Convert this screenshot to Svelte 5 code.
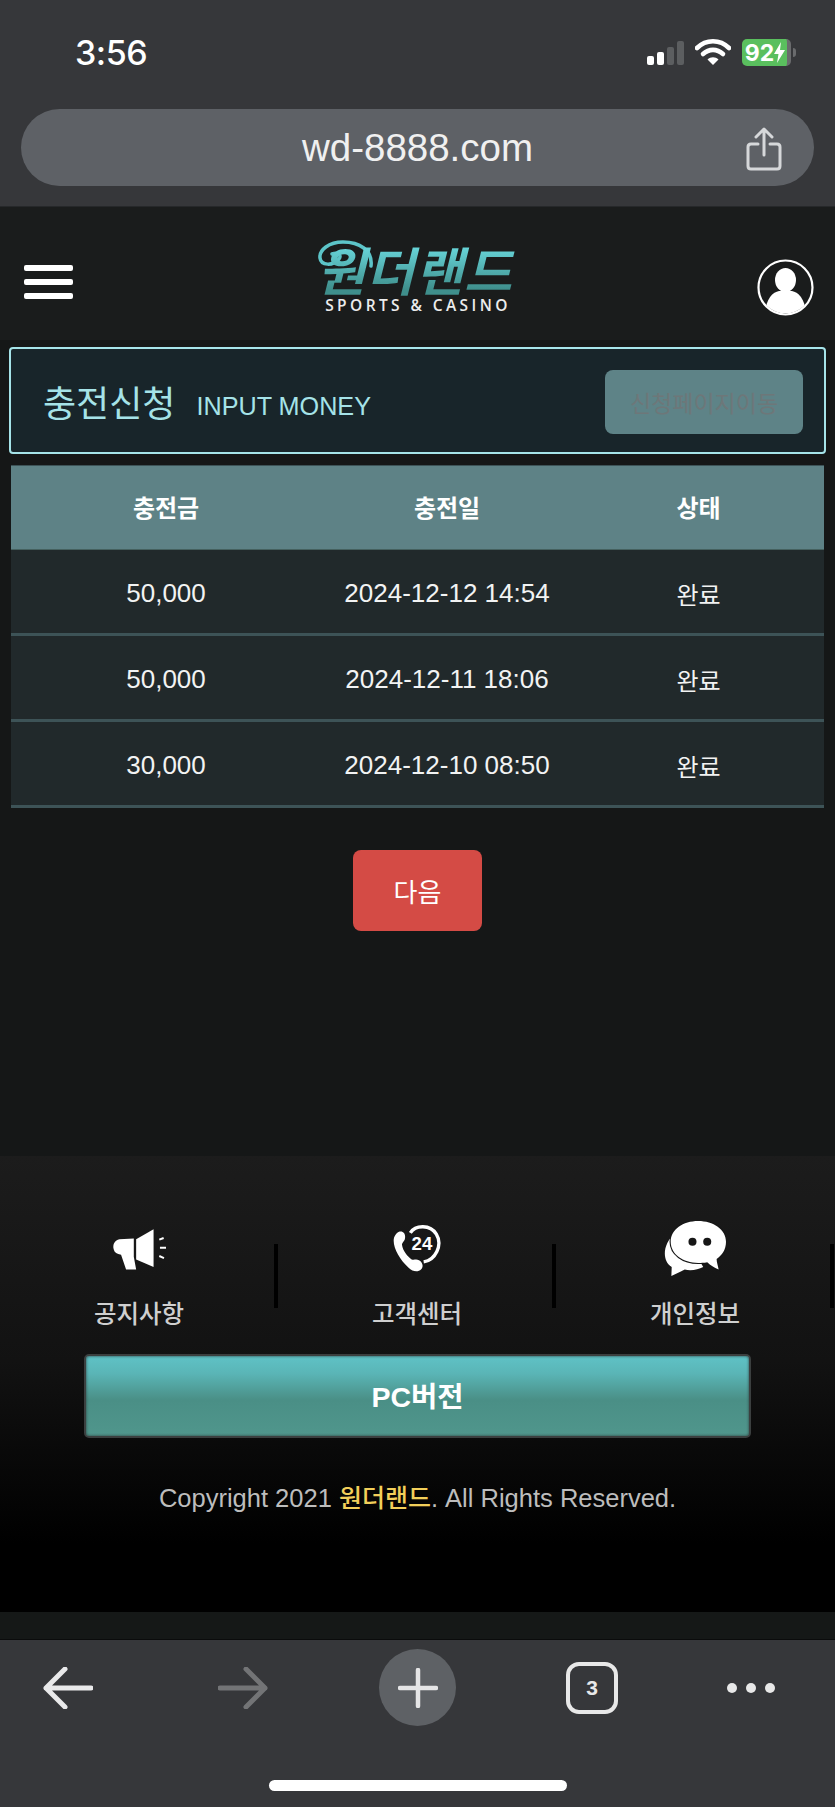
<script>
  const rows = [
    { amount: '50,000', date: '2024-12-12 14:54', status: '완료' },
    { amount: '50,000', date: '2024-12-11 18:06', status: '완료' },
    { amount: '30,000', date: '2024-12-10 08:50', status: '완료' }
  ];
</script>

<div class="page">
  <div class="topbar">
    <div class="status">
      <span class="time">3:56</span>
      <div class="status-right">
        <div class="signal">
          <i class="b1"></i><i class="b2"></i><i class="b3"></i><i class="b4"></i>
        </div>
        <svg class="wifi" width="36" height="28" viewBox="0 0 36 28">
          <path d="M2 10 C11 1 25 1 34 10" fill="none" stroke="#fff" stroke-width="4.6" stroke-linecap="round"/>
          <path d="M8 16 C14 10.500 22 10.500 28 16" fill="none" stroke="#fff" stroke-width="4.6" stroke-linecap="round"/>
          <path d="M12.500 21.500 C15.500 18.500 20.500 18.500 23.500 21.500 L18 27 Z" fill="#fff"/>
        </svg>
        <div class="battery">
          <div class="battery-body">
            <span>92</span>
            <svg width="11" height="21" viewBox="0 0 11 21"><path d="M7 0 L0 12 H4.500 L3 21 L11 8 H6 Z" fill="#fff"/></svg>
          </div>
          <i class="nub"></i>
        </div>
      </div>
    </div>
    <div class="urlbar">
      <span class="url">wd-8888.com</span>
      <svg class="share" width="36" height="44" viewBox="0 0 36 44" fill="none" stroke="#d6d8da" stroke-width="3" stroke-linecap="round" stroke-linejoin="round">
        <path d="M12 17 H5 Q2 17 2 20 V39 Q2 42 5 42 H31 Q34 42 34 39 V20 Q34 17 31 17 H24"/>
        <path d="M18 28 V3 M10 10 L18 2 L26 10"/>
      </svg>
    </div>
  </div>

  <header class="site-head">
    <div class="burger"><i></i><i></i><i></i></div>
    <div class="logo">
      <svg class="swirl" width="60" height="36" viewBox="0 0 60 36" fill="none">
        <path d="M54 26 C56 10 42 2 26 2 C12 2 2 10 3 18 C4 26 16 26 22 19 C25 15 21 12 15 14" stroke="#5cc4c8" stroke-width="3.500" stroke-linecap="round"/>
      </svg>
      <div class="logo-word">원더랜드</div>
      <div class="logo-sub">SPORTS &amp; CASINO</div>
    </div>
    <svg class="avatar" width="57" height="57" viewBox="0 0 57 57">
      <defs><clipPath id="avatar-clip"><circle cx="28.500" cy="28.500" r="26"/></clipPath></defs>
      <circle cx="28.500" cy="28.500" r="27" fill="#1a1c1c" stroke="#fff" stroke-width="2.200"/>
      <g clip-path="url(#avatar-clip)" fill="#fff">
        <ellipse cx="28.500" cy="21" rx="10.500" ry="12"/>
        <path d="M8 57 C8 40 16 33 22 32 H35 C41 33 49 40 49 57 Z"/>
      </g>
    </svg>
  </header>

  <main>
    <section class="panel">
      <div class="panel-title">
        <h2>충전신청</h2>
        <span>INPUT MONEY</span>
      </div>
      <button class="move">신청페이지이동</button>
    </section>

    <div class="table">
      <div class="row head">
        <div>충전금</div><div>충전일</div><div>상태</div>
      </div>
      {#each rows as row}
        <div class="row">
          <div>{row.amount}</div><div>{row.date}</div><div class="state">{row.status}</div>
        </div>
      {/each}
    </div>

    <div class="pager"><button class="next">다음</button></div>
  </main>

  <footer>
    <div class="links">
      <div class="link">
        <svg class="ico" width="57" height="45" viewBox="60 60 170 135">
          <path d="M135 100 L187 70 V183 L135 160 Z" fill="#fff"/>
          <path d="M128 98 L85 100 C72 102 64 115 68 130 C70 140 78 145 90 146 L105 190 H135 L128 152 Z" fill="#fff"/>
          <path d="M204 101 L217 96 M206 125 H224 M204 150 L218 156" stroke="#fff" stroke-width="6" fill="none"/>
        </svg>
        <span>공지사항</span>
      </div>
      <i class="sep"></i>
      <div class="link">
        <svg class="ico" width="49" height="50" viewBox="68 40 147 150">
          <path d="M120 68 C135 44 180 42 198 72 C218 105 195 150 160 155" fill="none" stroke="#fff" stroke-width="10"/>
          <path d="M88 64 C100 62 106 72 104 84 C103 94 95 96 95 104 C97 122 112 140 124 148 C132 150 138 146 146 150 C158 156 160 170 152 178 C144 186 128 186 114 172 C90 150 70 118 70 92 C70 78 78 68 88 64 Z" fill="#fff"/>
          <text x="155" y="120" text-anchor="middle" class="t24">24</text>
        </svg>
        <span>고객센터</span>
      </div>
      <i class="sep"></i>
      <div class="link">
        <svg class="ico" width="62" height="55" viewBox="883 33 185 164">
          <path d="M915 70 C880 100 875 150 906 170 L905 197 L945 178 C965 182 985 178 1000 170 L960 100 Z" fill="#fff"/>
          <path d="M985 33 C1030 33 1068 58 1068 95 C1068 118 1056 136 1040 146 C1040 156 1044 166 1046 178 C1032 172 1022 165 1012 156 C1002 158 994 158 985 158 C940 158 903 132 903 95 C903 58 940 33 985 33 Z" fill="#fff" stroke="#161616" stroke-width="7" paint-order="stroke"/>
          <circle cx="968" cy="95" r="12" fill="#161616"/>
          <circle cx="1012" cy="95" r="12" fill="#161616"/>
        </svg>
        <span>개인정보</span>
      </div>
      <i class="sep"></i>
    </div>

    <button class="pc">PC버전</button>
    <p class="copy">Copyright 2021 <b>원더랜드</b>. All Rights Reserved.</p>
  </footer>

  <div class="strip"></div>

  <nav class="toolbar">
    <div class="tools">
      <svg width="50" height="42" viewBox="0 0 50 42" fill="none" stroke="#e9e9ea" stroke-width="5" stroke-linecap="round" stroke-linejoin="round">
        <path d="M48 21 H3 M22 2 L3 21 L22 40"/>
      </svg>
      <svg width="50" height="42" viewBox="0 0 50 42" fill="none" stroke="#737476" stroke-width="5" stroke-linecap="round" stroke-linejoin="round">
        <path d="M2 21 H47 M28 2 L47 21 L28 40"/>
      </svg>
      <div class="plus">
        <svg width="40" height="40" viewBox="0 0 40 40" stroke="#e5e5e6" stroke-width="4.500" stroke-linecap="round">
          <path d="M20 2 V38 M2 20 H38"/>
        </svg>
      </div>
      <div class="tabs">3</div>
      <div class="dots"><i></i><i></i><i></i></div>
    </div>
    <div class="home"></div>
  </nav>
</div>

<style>
  :global(body) {
    margin: 0;
    background: #151717;
  }

  .page {
    width: 835px;
    height: 1807px;
    display: flex;
    flex-direction: column;
    overflow: hidden;
    font-family: "Liberation Sans", "Noto Sans CJK KR", sans-serif;
    color: #fff;
  }

  i {
    display: block;
  }

  button {
    font-family: inherit;
    border: none;
    padding: 0;
  }

  .topbar {
    height: 207px;
    box-sizing: border-box;
    background: #36373a;
    border-bottom: 1px solid #26282a;
    padding: 0 21px;
  }

  .status {
    height: 109px;
    display: flex;
    justify-content: space-between;
    align-items: flex-start;
    padding: 35px 18px 0 54px;
    box-sizing: border-box;
  }

  .time {
    font-size: 34px;
    line-height: 36px;
    font-weight: 500;
    font-family: Inter, sans-serif;
    letter-spacing: -0.5px;
  }

  .status-right {
    display: flex;
    align-items: flex-start;
    margin-top: 4px;
  }

  .signal {
    display: flex;
    align-items: flex-end;
    gap: 3px;
    height: 26px;
  }

  .signal i {
    width: 7px;
    border-radius: 2px;
  }

  .b1 { height: 9px; background: #fff; }
  .b2 { height: 13px; background: #fff; }
  .b3 { height: 18px; background: #5c5e60; }
  .b4 { height: 24px; background: #5c5e60; }

  .wifi {
    margin: -1px 11px 0 11px;
  }

  .battery {
    display: flex;
    align-items: center;
  }

  .battery-body {
    width: 49px;
    height: 27px;
    box-sizing: border-box;
    border-radius: 5px;
    border-right: 4px solid #6a6b6d;
    background: #5abf5e;
    display: flex;
    align-items: center;
    justify-content: center;
    font-family: Inter, sans-serif;
    font-size: 23px;
    font-weight: 700;
    padding-left: 1px;
  }

  .nub {
    width: 3px;
    height: 9px;
    margin-left: 2px;
    border-radius: 0 3px 3px 0;
    background: #6a6b6d;
  }

  .urlbar {
    height: 77px;
    background: #5e6166;
    border-radius: 39px;
    position: relative;
    display: flex;
    align-items: center;
    justify-content: center;
  }

  .url {
    font-size: 38.500px;
    color: #f0f0f0;
  }

  .share {
    position: absolute;
    right: 32px;
    top: 18px;
  }

  .site-head {
    height: 133px;
    box-sizing: border-box;
    background: #1a1c1c;
    display: flex;
    justify-content: space-between;
    align-items: flex-start;
    padding: 52px 21px 0 24px;
    position: relative;
  }

  .burger {
    width: 49px;
    margin-top: 6px;
    display: flex;
    flex-direction: column;
    gap: 8px;
  }

  .burger i {
    height: 6px;
    border-radius: 2px;
    background: #fff;
  }

  .logo {
    position: absolute;
    left: 317px;
    top: 33px;
    width: 202px;
    text-align: center;
  }

  .swirl {
    position: absolute;
    left: 0;
    top: 0;
  }

  .logo-word {
    font-family: "Noto Sans CJK KR", sans-serif;
    font-weight: 700;
    font-size: 52px;
    line-height: 58px;
    letter-spacing: 1px;
    margin-top: 0;
    text-align: left;
    white-space: nowrap;
    transform: skewX(-14deg);
    padding-left: 6px;
    background: linear-gradient(180deg, #66d2d6 15%, #3f8f8c 85%);
    -webkit-background-clip: text;
    background-clip: text;
    color: transparent;
  }

  .logo-sub {
    font-family: "Open Sans", sans-serif;
    font-weight: 600;
    font-size: 15.500px;
    line-height: 16px;
    letter-spacing: 3.400px;
    white-space: nowrap;
    color: #ececec;
    margin-top: -1px;
  }

  main {
    flex: 1;
    padding-top: 7px;
    background: #151717;
  }

  .panel {
    margin: 0 9px;
    height: 107px;
    box-sizing: border-box;
    background: #18252a;
    border: 2px solid #a5e3e8;
    border-radius: 4px;
    display: flex;
    align-items: center;
    justify-content: space-between;
    padding: 0 21px 0 32px;
  }

  .panel-title {
    display: flex;
    align-items: center;
    gap: 21px;
    color: #a5e3e8;
  }

  .panel-title h2 {
    margin: 0;
    font-weight: 400;
    font-size: 36px;
    font-family: "Noto Sans CJK KR", sans-serif;
  }

  .panel-title span {
    font-size: 25.200px;
    margin-top: 11px;
  }

  .move {
    width: 198px;
    height: 64px;
    margin-top: 3px;
    border-radius: 8px;
    background: #5e8387;
    color: #6d7779;
    font-size: 23px;
  }

  .table {
    margin: 11px 11px 0;
  }

  .row {
    display: grid;
    grid-template-columns: 310px 252px 251px;
    height: 86px;
    box-sizing: border-box;
    padding-top: 3px;
    align-items: center;
    text-align: center;
    background: #21292b;
    border-bottom: 3px solid #3d5357;
    font-size: 26px;
    color: #f2f3f3;
  }

  .row.head {
    height: 85px;
    padding: 0 0 2px;
    background: #5e8286;
    border-bottom: 1px solid #45615f;
    border-top: 1px solid #3d5357;
    font-size: 24px;
    font-weight: 700;
    color: #fff;
  }

  .state {
    font-size: 24px;
  }

  .pager {
    display: flex;
    justify-content: center;
    margin-top: 42px;
  }

  .next {
    width: 129px;
    height: 81px;
    border-radius: 8px;
    background: #d44b45;
    color: #fff;
    font-size: 26px;
  }

  footer {
    height: 456px;
    box-sizing: border-box;
    background: linear-gradient(180deg, #1c1c1c 0%, #121212 45%, #000 85%);
    padding-top: 65px;
  }

  .links {
    display: flex;
    height: 133px;
  }

  .link {
    width: 274px;
    box-sizing: border-box;
    padding-left: 4px;
    display: flex;
    flex-direction: column;
    align-items: center;
    font-size: 24.500px;
    font-weight: 500;
    color: #cfcfcf;
  }

  .ico {
    height: 55px;
    margin-bottom: 23px;
  }

  .t24 {
    font-family: "Liberation Sans", sans-serif;
    font-weight: 700;
    font-size: 56px;
    fill: #fff;
  }

  .link span {
    line-height: 32px;
  }

  .sep {
    width: 4px;
    height: 64px;
    margin-top: 23px;
    background: #000;
  }

  .pc {
    display: block;
    margin: 0 0 0 84px;
    width: 667px;
    height: 84px;
    box-sizing: border-box;
    border: 2px solid #3b3f3f;
    border-radius: 5px;
    padding-bottom: 4px;
    background: linear-gradient(180deg, #5fc2c6 0%, #5ab5b6 22%, #4a8f86 55%, #50968c 100%);
    box-shadow: inset 0 0 3px #2c3a3a;
    color: #fff;
    font-size: 28.500px;
    font-weight: 700;
  }

  .copy {
    margin: 44px 0 0;
    text-align: center;
    font-size: 25.500px;
    line-height: 32px;
    color: #bdbdbd;
  }

  .copy b {
    color: #f2cf5a;
    font-weight: 500;
    font-size: 25px;
  }

  .strip {
    height: 27px;
    background: #151817;
    border-bottom: 1px solid #0b0c0c;
  }

  .toolbar {
    height: 167px;
    background: #36373a;
    display: flex;
    flex-direction: column;
    align-items: center;
  }

  .tools {
    width: 100%;
    height: 140px;
    position: relative;
  }

  .tools > svg:nth-child(1) {
    position: absolute;
    left: 43px;
    top: 27px;
  }

  .tools > svg:nth-child(2) {
    position: absolute;
    left: 218px;
    top: 27px;
  }

  .plus {
    position: absolute;
    left: 379px;
    top: 9px;
    width: 77px;
    height: 77px;
    border-radius: 50%;
    background: #5e6165;
    display: flex;
    align-items: center;
    justify-content: center;
  }

  .tabs {
    position: absolute;
    left: 566px;
    top: 22px;
    width: 52px;
    height: 52px;
    box-sizing: border-box;
    border: 4px solid #e8e8e8;
    border-radius: 13px;
    display: flex;
    align-items: center;
    justify-content: center;
    font-size: 21px;
    font-weight: 700;
    color: #e8e8e8;
  }

  .dots {
    position: absolute;
    left: 727px;
    top: 43px;
    display: flex;
    gap: 9px;
  }

  .dots i {
    width: 10px;
    height: 10px;
    border-radius: 50%;
    background: #e8e8e8;
  }

  .home {
    width: 298px;
    height: 11px;
    border-radius: 6px;
    background: #fff;
  }
</style>
